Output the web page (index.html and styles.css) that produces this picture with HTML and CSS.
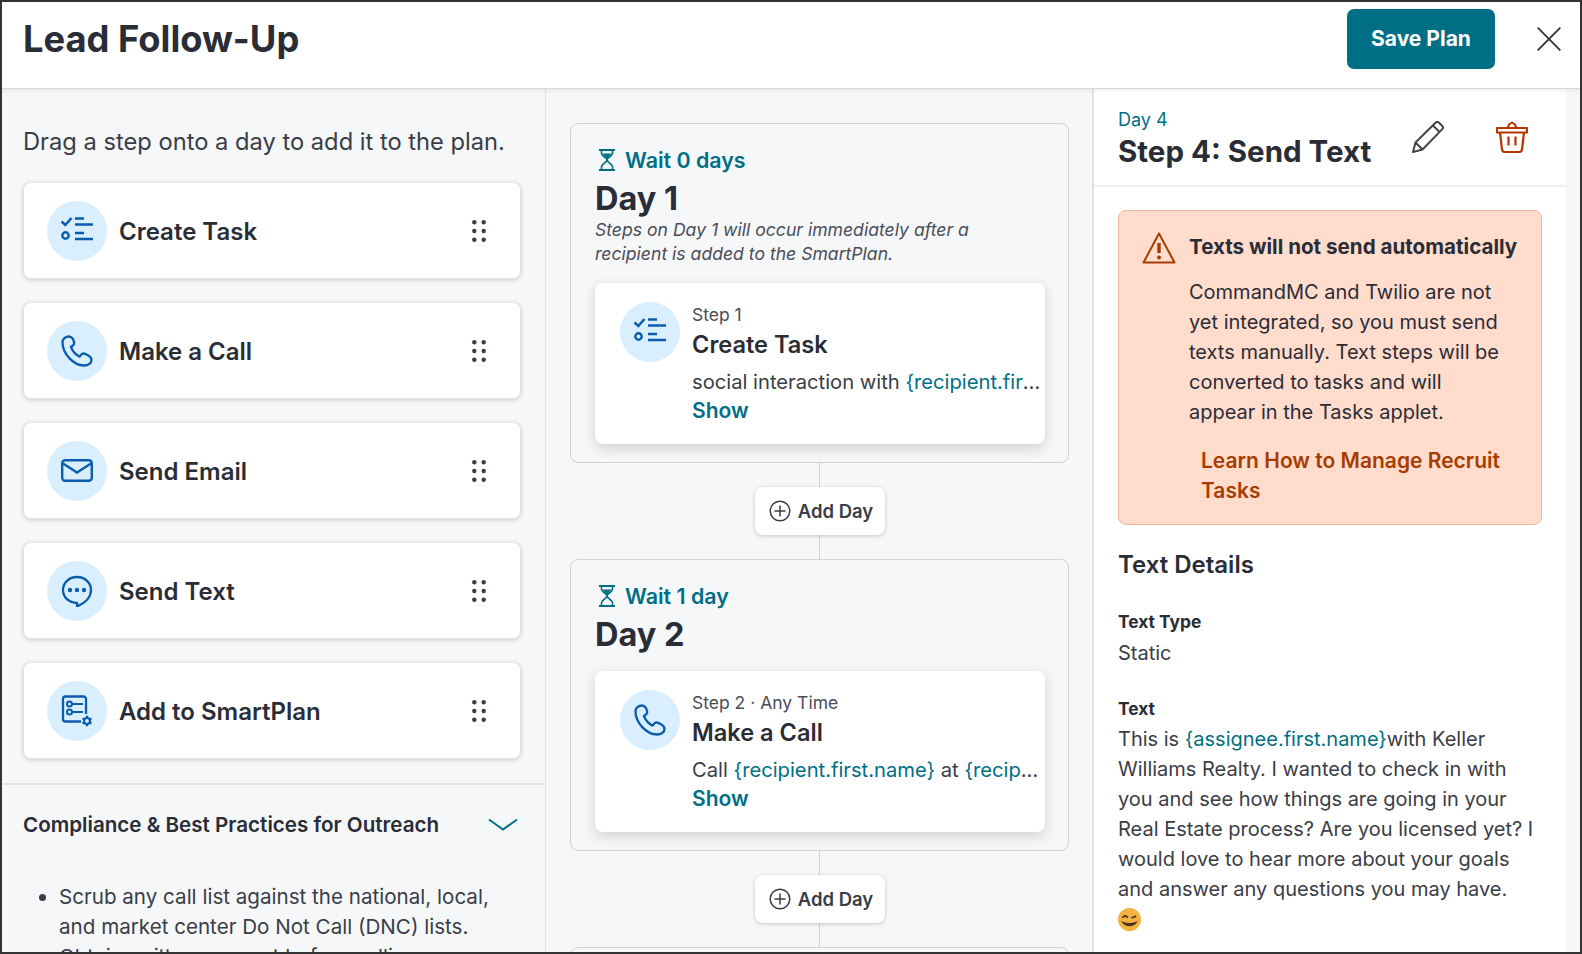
FILE: index.html
```html
<!DOCTYPE html>
<html lang="en">

<head>
    <meta charset="UTF-8">
    <title>Lead Follow-Up</title>
    <link rel="stylesheet" href="styles.css">
</head>

<body>
    <svg class="icon-defs" width="0" height="0">
        <defs>
            <symbol id="i-task" viewBox="0 0 32 32">
                <path d="M.5 6.500l3.800 3.500L10.500 3" fill="none" stroke="currentColor" stroke-width="2.600" />
                <circle cx="4.500" cy="20.500" r="3.200" fill="none" stroke="currentColor" stroke-width="2.400" />
                <path d="M14 3.500h9M14 9.500h18M14 18h9M14 24h18" fill="none" stroke="currentColor" stroke-width="2.400" />
            </symbol>
            <symbol id="i-phone" viewBox="0 0 32 32">
                <path d="M8 1.500c-3.500 0-6.500 2.500-6.500 6 0 11 11 23 21.500 23 4.500 0 7.500-2.500 7.500-5.500 0-2.500-1.500-3.800-3.500-4.800l-2.800-1.300c-1.700-.8-3.200-.3-4.200 1l-1.300 1.700c-4-1.800-7-5.300-8.800-9.600l1.800-1.300c1.400-1 1.800-2.500 1.200-4.100l-1-2.800C11 2.700 9.800 1.500 8 1.500z" fill="none" stroke="currentColor" stroke-width="2.300" stroke-linejoin="round" />
            </symbol>
            <symbol id="i-mail" viewBox="0 0 32 24">
                <rect x="1.200" y="1.200" width="29.600" height="20.600" rx="3" fill="none" stroke="currentColor" stroke-width="2.400" />
                <path d="M2 4.500L16 13.500l14-9" fill="none" stroke="currentColor" stroke-width="2.400" />
            </symbol>
            <symbol id="i-chat" viewBox="0 0 32 32">
                <path d="M16 2C8 2 2 7.800 2 15s6 13 14 13v3.500c6-2.500 14-8 14-16.500C30 7.800 24 2 16 2z" fill="none" stroke="currentColor" stroke-width="2.300" stroke-linejoin="round" />
                <circle cx="9" cy="15" r="2.200" fill="currentColor" />
                <circle cx="16" cy="15" r="2.200" fill="currentColor" />
                <circle cx="23" cy="15" r="2.200" fill="currentColor" />
            </symbol>
            <symbol id="i-plan" viewBox="0 0 32 32">
                <path d="M25 19V4a2.500 2.500 0 0 0-2.500-2.500h-18A2.500 2.500 0 0 0 2 4v20a2.500 2.500 0 0 0 2.500 2.500H20" fill="none" stroke="currentColor" stroke-width="2.300" />
                <circle cx="8.500" cy="9" r="2.500" fill="none" stroke="currentColor" stroke-width="2" />
                <circle cx="8.500" cy="17" r="2.500" fill="none" stroke="currentColor" stroke-width="2" />
                <path d="M11 9h11M11 17h11" fill="none" stroke="currentColor" stroke-width="2.200" />
                <circle cx="26" cy="26" r="3" fill="none" stroke="currentColor" stroke-width="2.200" />
                <path d="M26 20.800v2.700M26 28.500v2.700M21.500 23.400l2.300 1.300M28.200 27.300l2.300 1.300M21.500 28.600l2.300-1.300M28.200 24.700l2.300-1.300" fill="none" stroke="currentColor" stroke-width="2.200" />
            </symbol>
            <symbol id="i-grip" viewBox="0 0 14 22">
                <circle cx="2.300" cy="2.300" r="2.200" />
                <circle cx="11.700" cy="2.300" r="2.200" />
                <circle cx="2.300" cy="11" r="2.200" />
                <circle cx="11.700" cy="11" r="2.200" />
                <circle cx="2.300" cy="19.700" r="2.200" />
                <circle cx="11.700" cy="19.700" r="2.200" />
            </symbol>
            <symbol id="i-wait" viewBox="0 0 16 22">
                <path d="M0 1h16M0 21h16" fill="none" stroke="currentColor" stroke-width="2" />
                <path d="M2.500 1v3c0 3 5.500 5 5.500 7s-5.500 4-5.500 7v3M13.500 1v3c0 3-5.500 5-5.500 7s5.500 4 5.500 7v3" fill="none" stroke="currentColor" stroke-width="1.600" />
                <path d="M3.500 4.500h9L8 10z" fill="currentColor" />
            </symbol>
            <symbol id="i-plus" viewBox="0 0 22 22">
                <circle cx="11" cy="11" r="9.800" fill="none" stroke="currentColor" stroke-width="1.500" />
                <path d="M11 5.500v11M5.500 11h11" fill="none" stroke="currentColor" stroke-width="1.500" />
            </symbol>
        </defs>
    </svg>

    <div class="app">
        <header class="top-bar">
            <h1 class="plan-title">Lead Follow-Up</h1>
            <button class="save-button">Save Plan</button>
            <svg class="close-icon" viewBox="0 0 24 24">
                <path d="M.7.7l22.600 22.600M23.300.7L.7 23.300" fill="none" stroke="currentColor" stroke-width="1.800" />
            </svg>
        </header>

        <main class="columns">
            <aside class="palette">
                <div class="palette-top">
                    <p class="palette-hint">Drag a step onto a day to add it to the plan.</p>

                    <div class="step-option">
                        <span class="icon-circle"><svg class="icon-32"><use href="#i-task" /></svg></span>
                        <span class="option-name">Create Task</span>
                        <svg class="grip"><use href="#i-grip" /></svg>
                    </div>
                    <div class="step-option">
                        <span class="icon-circle"><svg class="icon-32"><use href="#i-phone" /></svg></span>
                        <span class="option-name">Make a Call</span>
                        <svg class="grip"><use href="#i-grip" /></svg>
                    </div>
                    <div class="step-option">
                        <span class="icon-circle"><svg class="icon-mail"><use href="#i-mail" /></svg></span>
                        <span class="option-name">Send Email</span>
                        <svg class="grip"><use href="#i-grip" /></svg>
                    </div>
                    <div class="step-option">
                        <span class="icon-circle"><svg class="icon-32"><use href="#i-chat" /></svg></span>
                        <span class="option-name">Send Text</span>
                        <svg class="grip"><use href="#i-grip" /></svg>
                    </div>
                    <div class="step-option">
                        <span class="icon-circle"><svg class="icon-32"><use href="#i-plan" /></svg></span>
                        <span class="option-name">Add to SmartPlan</span>
                        <svg class="grip"><use href="#i-grip" /></svg>
                    </div>
                </div>

                <div class="compliance">
                    <div class="compliance-head">
                        <span>Compliance &amp; Best Practices for Outreach</span>
                        <svg class="chevron" viewBox="0 0 30 14">
                            <path d="M1 1.500l14 10 14-10" fill="none" stroke="currentColor" stroke-width="2" />
                        </svg>
                    </div>
                    <ul class="compliance-list">
                        <li>Scrub any call list against the national, local, and market center Do Not Call (DNC) lists. Obtain written consent before calling or texting.</li>
                    </ul>
                </div>
            </aside>

            <section class="timeline">
                <div class="day-card">
                    <div class="wait-row"><svg class="wait-icon"><use href="#i-wait" /></svg>Wait 0 days</div>
                    <h2 class="day-title">Day 1</h2>
                    <p class="day-note">Steps on Day 1 will occur immediately after a recipient is added to the SmartPlan.</p>
                    <div class="step-card">
                        <span class="icon-circle"><svg class="icon-32"><use href="#i-task" /></svg></span>
                        <div class="step-body">
                            <div class="step-label">Step 1</div>
                            <div class="step-name">Create Task</div>
                            <div class="step-desc">social interaction with <span class="merge">{recipient.first.name}</span> at the office</div>
                            <div class="show-link">Show</div>
                        </div>
                    </div>
                </div>

                <div class="connector">
                    <button class="add-day"><svg class="plus-icon"><use href="#i-plus" /></svg>Add Day</button>
                </div>

                <div class="day-card">
                    <div class="wait-row"><svg class="wait-icon"><use href="#i-wait" /></svg>Wait 1 day</div>
                    <h2 class="day-title">Day 2</h2>
                    <div class="step-card">
                        <span class="icon-circle"><svg class="icon-32"><use href="#i-phone" /></svg></span>
                        <div class="step-body">
                            <div class="step-label">Step 2 &middot; Any Time</div>
                            <div class="step-name">Make a Call</div>
                            <div class="step-desc">Call <span class="merge">{recipient.first.name}</span> at <span class="merge">{recipient.phone}</span></div>
                            <div class="show-link">Show</div>
                        </div>
                    </div>
                </div>

                <div class="connector">
                    <button class="add-day"><svg class="plus-icon"><use href="#i-plus" /></svg>Add Day</button>
                </div>

                <div class="day-card"></div>
            </section>

            <section class="details">
                <div class="details-head">
                    <div class="details-titles">
                        <div class="details-day">Day 4</div>
                        <h2 class="details-title">Step 4: Send Text</h2>
                    </div>
                    <svg class="edit-icon" viewBox="0 0 32 32">
                        <path d="M1 31l2.500-9.500L23.500 1.800c1-1 2.600-1 3.600 0l3 3c1 1 1 2.600 0 3.600L10.500 28.500zM3.500 21.500l7 7M21 4.500l6.500 6.500" fill="none" stroke="currentColor" stroke-width="2" stroke-linejoin="round" />
                    </svg>
                    <svg class="trash-icon" viewBox="0 0 32 32">
                        <path d="M1 7h30v4.500H1zM11.500 7l1.500-3.500 3-2 3 2L20.500 7" fill="none" stroke="currentColor" stroke-width="2" stroke-linejoin="round" />
                        <path d="M4 11.500l2 17c.2 1.500 1.300 2.500 2.800 2.500h14.400c1.500 0 2.600-1 2.800-2.500l2-17M12.500 15.500v9M19.500 15.500v9" fill="none" stroke="currentColor" stroke-width="2.200" />
                    </svg>
                </div>

                <div class="details-body">
                    <div class="alert-box">
                        <div class="alert-row">
                            <svg class="alert-icon" viewBox="0 0 34 32">
                                <path d="M17 1.500L1.500 30.500h31z" fill="none" stroke="currentColor" stroke-width="2" stroke-linejoin="round" />
                                <path d="M17 11v10" fill="none" stroke="currentColor" stroke-width="3.400" />
                                <circle cx="17" cy="25.500" r="2" fill="currentColor" />
                            </svg>
                            <div class="alert-text">
                                <div class="alert-title">Texts will not send automatically</div>
                                <p class="alert-copy">CommandMC and Twilio are not yet integrated, so you must send texts manually. Text steps will be converted to tasks and will appear in the Tasks applet.</p>
                                <div class="alert-link">Learn How to Manage Recruit Tasks</div>
                            </div>
                        </div>
                    </div>

                    <h3 class="section-title">Text Details</h3>

                    <div class="field-label">Text Type</div>
                    <div class="field-value">Static</div>

                    <div class="field-label">Text</div>
                    <div class="field-value">
                        This is <span class="merge">{assignee.first.name}</span>with Keller Williams Realty. I wanted to check in with you and see how things are going in your Real Estate process? Are you licensed yet? I would love to hear more about your goals and answer any questions you may have.
                        <svg class="wink" viewBox="0 0 24 24">
                            <circle cx="12" cy="12" r="12" fill="#f4b340" />
                            <path d="M4.500 10l3 -2 3 2M14 10.500l5-2" fill="none" stroke="#4a3520" stroke-width="1.800" />
                            <path d="M5 15c3.500 4.500 10.500 4.500 14 0-4 1.500-10 1.500-14 0z" fill="#4a3520" stroke="#4a3520" stroke-width="1.200" />
                        </svg>
                    </div>
                </div>
            </section>
        </main>
    </div>
</body>

</html>
```

FILE: styles.css
```css
* {
    box-sizing: border-box;
}

html,
body {
    margin: 0;
    height: 100%;
}

body {
    font-family: Inter, Arial, sans-serif;
    color: #2a2d36;
    background-color: #f6f7f9;
    overflow: hidden;
}

h1,
h2,
h3,
p {
    margin: 0;
}

.icon-defs {
    position: absolute;
}

.app {
    height: 954px;
    display: flex;
    flex-direction: column;
    border: 2px solid #333;
    overflow: hidden;
}

/* Top bar */
.top-bar {
    flex: none;
    height: 87px;
    display: flex;
    align-items: center;
    padding: 0 19px 13px 21px;
    background-color: #fff;
    border-bottom: 1px solid #d8d8d8;
    box-shadow: 0 1px 6px rgba(0, 0, 0, 0.08);
    position: relative;
    z-index: 2;
}

.plan-title {
    flex: 1;
    font-size: 36.3px;
    font-weight: 700;
}

.save-button {
    width: 148px;
    height: 60px;
    border: none;
    border-radius: 7px;
    background-color: #006f85;
    color: #fff;
    font-family: inherit;
    font-size: 21px;
    font-weight: 700;
}

.close-icon {
    width: 24px;
    height: 24px;
    margin-left: 42px;
    color: #333;
}

.columns {
    flex: 1;
    min-height: 0;
    display: flex;
    padding-right: 14px;
}

/* Left column */
.palette {
    flex: none;
    width: 543px;
    display: flex;
    flex-direction: column;
    overflow: hidden;
}

.palette-top {
    padding: 38px 24px 24px 21px;
    border-bottom: 2px solid #e1e3e6;
}

.palette-hint {
    font-size: 23.7px;
    line-height: 30px;
    color: #3a3d46;
    margin-bottom: 25px;
}

.step-option {
    display: flex;
    align-items: center;
    height: 97px;
    padding: 0 34px 0 23px;
    margin-bottom: 23px;
    background-color: #fff;
    border-radius: 8px;
    border: 1px solid #e4e4e4;
    box-shadow: 0 1px 4px rgba(0, 0, 0, 0.18);
}

.step-option:last-child {
    margin-bottom: 0;
}

.icon-circle {
    flex: none;
    width: 60px;
    height: 60px;
    border-radius: 50%;
    background-color: #d9eeff;
    color: #0b5cad;
    display: flex;
    align-items: center;
    justify-content: center;
}

.icon-32 {
    width: 32px;
    height: 32px;
}

.icon-mail {
    width: 32px;
    height: 24px;
}

.option-name {
    flex: 1;
    margin-left: 12px;
    padding-top: 2px;
    font-size: 24px;
    font-weight: 600;
}

.grip {
    width: 14px;
    height: 22px;
    fill: #3a3d46;
}

.compliance {
    padding: 25px 27px 0 21px;
}

.compliance-head {
    display: flex;
    justify-content: space-between;
    align-items: center;
    font-size: 20.6px;
    font-weight: 600;
    line-height: 30px;
}

.chevron {
    width: 30px;
    height: 14px;
    color: #006f85;
}

.compliance-list {
    margin: 42px 0 0;
    padding-left: 36px;
    font-size: 20.6px;
    line-height: 30px;
    color: #3a3d46;
}

/* Middle column */
.timeline {
    flex: none;
    width: 547px;
    padding: 34px 23px 0 24px;
    border-left: 1px solid #e1e3e6;
    overflow: hidden;
}

.day-card {
    padding: 23px 23px 18px 24px;
    border: 1px solid #cfd2d6;
    border-radius: 8px;
    min-height: 40px;
}

.wait-row {
    display: flex;
    align-items: center;
    font-size: 21.4px;
    font-weight: 600;
    line-height: 26px;
    color: #006f85;
}

.wait-icon {
    width: 16px;
    height: 22px;
    margin: 0 10px 0 4px;
    color: #006f85;
}

.day-title {
    margin-top: 7px;
    font-size: 32.5px;
    line-height: 38px;
    font-weight: 700;
}

.day-note {
    font-size: 17.6px;
    line-height: 24px;
    font-style: italic;
    color: #4a4d56;
}

.step-card {
    display: flex;
    margin-top: 17px;
    height: 161px;
    padding: 20px 4px 0 25px;
    background-color: #fff;
    border-radius: 8px;
    box-shadow: 0 4px 14px rgba(0, 0, 0, 0.16);
}

.step-card .icon-circle {
    margin-top: -1px;
}

.step-body {
    flex: 1;
    min-width: 0;
    margin-left: 12px;
}

.step-label {
    font-size: 17.5px;
    line-height: 24px;
    color: #4a4d56;
}

.step-name {
    margin-top: 2px;
    font-size: 23.6px;
    line-height: 32px;
    font-weight: 600;
}

.step-desc {
    margin-top: 6px;
    font-size: 20.2px;
    line-height: 30px;
    white-space: nowrap;
    overflow: hidden;
    text-overflow: ellipsis;
    color: #3a3d46;
}

.merge {
    color: #006f85;
}

.show-link {
    font-size: 21px;
    line-height: 28px;
    font-weight: 600;
    color: #006f85;
}

.connector {
    position: relative;
    display: flex;
    justify-content: center;
    padding: 24px 0;
    background: linear-gradient(#cfd2d6, #cfd2d6) center / 1px 100% no-repeat;
}

.add-day {
    display: flex;
    align-items: center;
    justify-content: center;
    width: 130px;
    height: 48px;
    padding: 0 0 0 3px;
    border: none;
    border-radius: 8px;
    background-color: #fff;
    box-shadow: 0 1px 4px rgba(0, 0, 0, 0.2);
    font-family: inherit;
    font-size: 18.5px;
    font-weight: 600;
    color: #3a3d46;
}

.plus-icon {
    width: 22px;
    height: 22px;
    margin-right: 7px;
}

/* Right column */
.details {
    flex: none;
    width: 474px;
    background-color: #fff;
    border-left: 2px solid #e1e3e6;
    overflow: hidden;
}

.details-head {
    display: flex;
    height: 98px;
    padding: 19px 0 0 24px;
    border-bottom: 2px solid #eceef0;
}

.details-titles {
    width: 294px;
}

.details-day {
    font-size: 18px;
    line-height: 24px;
    color: #006f85;
}

.details-title {
    font-size: 29.5px;
    line-height: 38px;
    font-weight: 700;
}

.edit-icon {
    width: 32px;
    height: 32px;
    margin-top: 13px;
    color: #444;
}

.trash-icon {
    width: 32px;
    height: 32px;
    margin: 13px 0 0 52px;
    color: #b83500;
}

.details-body {
    padding: 23px 24px 0 24px;
}

.alert-box {
    padding: 21px 20px 18px 23px;
    background-color: #ffdccc;
    border: 1px solid #efb89c;
    border-radius: 8px;
}

.alert-row {
    display: flex;
}

.alert-icon {
    flex: none;
    width: 34px;
    height: 32px;
    color: #a83c00;
}

.alert-text {
    margin-left: 13px;
}

.alert-title {
    font-size: 20.6px;
    line-height: 30px;
    font-weight: 700;
    white-space: nowrap;
}

.alert-copy {
    max-width: 316px;
    margin-top: 15px;
    font-size: 20px;
    line-height: 30px;
}

.alert-link {
    margin: 19px 0 0 12px;
    font-size: 21px;
    line-height: 30px;
    font-weight: 600;
    color: #a83c00;
}

.section-title {
    margin-top: 24px;
    margin-bottom: 6px;
    font-size: 24px;
    line-height: 32px;
    font-weight: 600;
}

.field-label {
    margin-top: 26px;
    padding-bottom: 1.5px;
    font-size: 17.4px;
    line-height: 29px;
    font-weight: 700;
}

.field-value {
    font-size: 20px;
    line-height: 30px;
    margin-bottom: 8px;
    color: #3a3d46;
}

.wink {
    display: block;
    width: 23px;
    height: 23px;
    margin-top: 4px;
}
```
